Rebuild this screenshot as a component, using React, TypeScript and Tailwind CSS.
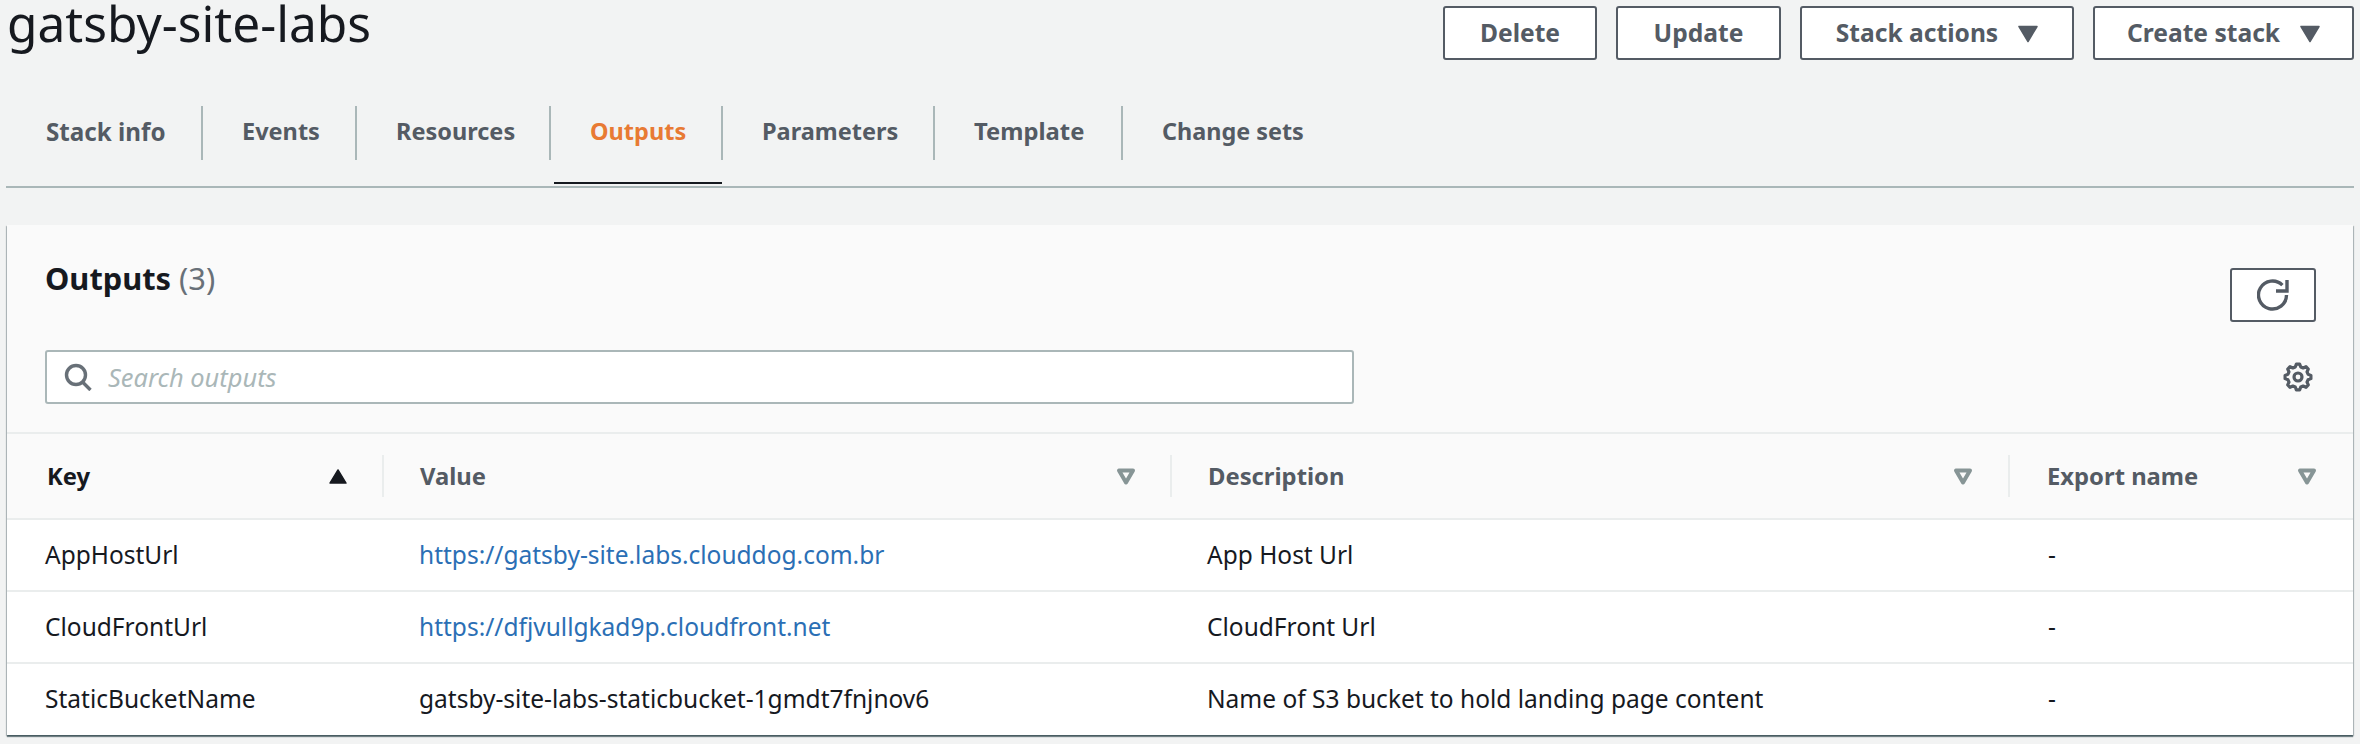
import React from "react";

const gearPath = (() => {
  const pts: string[] = [];
  const n = 8;
  for (let i = 0; i < n; i++) {
    const a = (i * 2 * Math.PI) / n - Math.PI / 2;
    const step = (2 * Math.PI) / n;
    const spec: [number, number][] = [
      [-0.16, 13],
      [0.16, 13],
      [0.34, 10.4],
      [0.66, 10.4],
    ];
    for (const [f, r] of spec) {
      const t = a + f * step;
      pts.push(`${(15 + r * Math.cos(t)).toFixed(2)} ${(15 + r * Math.sin(t)).toFixed(2)}`);
    }
  }
  return `M${pts.join("L")}z`;
})();

const Caret = () => (
  <svg viewBox="0 0 20 20" className="w-[20px] h-[20px]">
    <path d="M1 3.5h18L10 18.5z" fill="#545b64" stroke="#545b64" strokeWidth="1.5" strokeLinejoin="round" />
  </svg>
);

const Filter = () => (
  <svg viewBox="0 0 20 18" className="w-[20px] h-[18px]">
    <path d="M3 2.500h14L10 14.500z" fill="none" stroke="#879596" strokeWidth="4" strokeLinejoin="round" />
  </svg>
);

const Btn = ({ w, children }: { w: string; children: React.ReactNode }) => (
  <button className={`${w} h-[54px] flex items-center justify-center gap-[20px] bg-white border-2 border-[#545b64] rounded-[3px] text-[24.6px] font-bold text-[#545b64]`}>
    {children}
  </button>
);

const tabs = [
  { t: "Stack info", w: "w-[197px]", pl: "pl-[40px]", fs: "text-[24.2px]" },
  { t: "Events", w: "w-[154px]", pl: "pl-[39px]", fs: "text-[23.5px]" },
  { t: "Resources", w: "w-[194px]", pl: "pl-[39px]", fs: "text-[23.5px]" },
  { t: "Outputs", w: "w-[172px]", pl: "pl-[39px]", fs: "text-[23.5px]", active: true },
  { t: "Parameters", w: "w-[212px]", pl: "pl-[39px]", fs: "text-[23.5px]" },
  { t: "Template", w: "w-[188px]", pl: "pl-[39px]", fs: "text-[23.8px]" },
  { t: "Change sets", w: "w-[220px]", pl: "pl-[39px]", fs: "text-[23.4px]", last: true },
];

const cols = "grid grid-cols-[377px_788px_838px_1fr]";

const rows = [
  ["AppHostUrl", "https://gatsby-site.labs.clouddog.com.br", "App Host Url", true],
  ["CloudFrontUrl", "https://dfjvullgkad9p.cloudfront.net", "CloudFront Url", true],
  ["StaticBucketName", "gatsby-site-labs-staticbucket-1gmdt7fnjnov6", "Name of S3 bucket to hold landing page content", false],
] as const;

export default function App() {
  return (
    <div className="w-[2360px] h-[744px] overflow-hidden bg-[#f2f3f3] font-['Noto_Sans',sans-serif] text-[#16191f]">
      <div className="flex justify-between h-[106px] pl-[7px] pr-[6px]">
        <h1 className="text-[49.6px] leading-[46px] text-[#16191f]">gatsby-site-labs</h1>
        <div className="flex mt-[6px] gap-[19px] items-start">
          <Btn w="w-[154px]">Delete</Btn>
          <Btn w="w-[165px]">Update</Btn>
          <Btn w="w-[274px]">Stack actions<Caret /></Btn>
          <Btn w="w-[261px]">Create stack<Caret /></Btn>
        </div>
      </div>

      <div className="mx-[6px] h-[82px] border-b-2 border-[#aab7b8] flex items-start">
        {tabs.map((x) => (
          <div key={x.t} className={`${x.w} flex flex-col`}>
            <div className={`h-[54px] flex items-center pb-[2px] ${x.pl} ${x.last ? "" : "border-r-2 border-[#aab7b8]"} ${x.fs} font-bold ${x.active ? "text-[#e87a33]" : "text-[#545b64]"}`}>
              {x.t}
            </div>
            {x.active && <div className="mt-[22px] ml-[3px] mr-[1px] h-[2px] bg-[#16191f]" />}
          </div>
        ))}
      </div>

      <div className="mt-[37px] mx-[7px] h-[510px] bg-white shadow-[0_2px_1px_0_rgba(0,28,36,0.5),1px_1px_1px_0_rgba(0,28,36,0.22),-1px_1px_1px_0_rgba(0,28,36,0.22)]">
        <div className="h-[207px] bg-[#fafafa] pt-[43px]">
          <div className="flex justify-between items-start pl-[38px] pr-[37px]">
            <h2 className="text-[30.8px] leading-[40px] font-bold mt-[-10px]">
              Outputs <span className="font-normal text-[#687078]">(3)</span>
            </h2>
            <button className="w-[86px] h-[54px] flex items-center justify-center bg-white border-2 border-[#545b64] rounded-[3px]">
              <svg viewBox="0 0 32 32" className="w-[32px] h-[32px]" fill="none" stroke="#545b64" strokeWidth="3.4">
                <path d="M29.500 16A14 14 0 1 1 25.400 6.100" />
                <path d="M30 1v11H19" strokeLinejoin="miter" />
              </svg>
            </button>
          </div>
          <div className="flex justify-between items-center mt-[28px] pl-[38px] pr-[40px]">
            <div className="w-[1309px] h-[54px] flex items-center bg-white border-2 border-[#aab7b8] rounded-[3px] pl-[17px]">
              <svg viewBox="0 0 28 28" className="w-[28px] h-[28px]" fill="none" stroke="#687078" strokeWidth="3.400">
                <circle cx="12" cy="12" r="9.500" />
                <path d="M18.500 19l8 8" />
              </svg>
              <span className="ml-[16px] text-[25.400px] italic text-[#aab7b8]">Search outputs</span>
            </div>
            <svg viewBox="0 0 30 30" className="w-[30px] h-[30px]" fill="none" stroke="#545b64" strokeWidth="3.200" strokeLinejoin="round">
              <path d={gearPath} />
              <circle cx="15" cy="15" r="4" />
            </svg>
          </div>
        </div>

        <div className={`${cols} h-[88px] items-center bg-[#fafafa] border-y-2 border-[#eaeded] text-[23.800px] font-bold text-[#545b64]`}>
          <div className="flex items-center justify-between pt-[1px] pl-[40px] pr-[34px] border-r-2 border-[#eaeded] h-[42px] text-[#16191f]">
            Key
            <svg viewBox="0 0 20 18" className="w-[20px] h-[17px]"><path d="M10 2l8.500 14h-17z" fill="#16191f" stroke="#16191f" strokeWidth="1.500" strokeLinejoin="round" /></svg>
          </div>
          <div className="flex items-center justify-between pt-[1px] pl-[36px] pr-[34px] border-r-2 border-[#eaeded] h-[42px]">
            Value<Filter />
          </div>
          <div className="flex items-center justify-between pt-[1px] pl-[36px] pr-[35px] border-r-2 border-[#eaeded] h-[42px]">
            Description<Filter />
          </div>
          <div className="flex items-center justify-between pt-[1px] pl-[37px] pr-[36px] h-[42px]">
            Export name<Filter />
          </div>
        </div>

        {rows.map(([k, v, d, link], i) => (
          <div key={k} className={`${cols} h-[72px] items-center text-[24.500px] ${i < 2 ? "border-b-2 border-[#eaeded]" : "pb-[2px]"}`}>
            <div className="pl-[38px]">{k}</div>
            <div className={`pl-[35px] ${link ? "text-[#2b6fb5]" : ""}`}>{v}</div>
            <div className="pl-[35px]">{d}</div>
            <div className="pl-[38px]">-</div>
          </div>
        ))}
      </div>
    </div>
  );
}
